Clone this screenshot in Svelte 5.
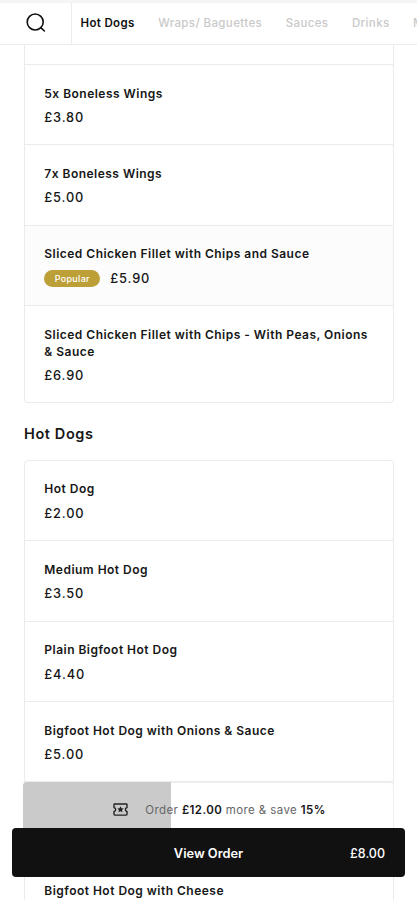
<script>
  let tabs = ["Hot Dogs", "Wraps/ Baguettes", "Sauces", "Drinks", "Milkshakes"];
  let activeTab = "Hot Dogs";

  let chicken = [
    { name: "5x Boneless Wings", price: 3.8 },
    { name: "7x Boneless Wings", price: 5 },
    { name: "Sliced Chicken Fillet with Chips and Sauce", price: 5.9, popular: true },
    { name: "Sliced Chicken Fillet with Chips - With Peas, Onions & Sauce", price: 6.9 },
  ];

  let hotDogs = [
    { name: "Hot Dog", price: 2 },
    { name: "Medium Hot Dog", price: 3.5 },
    { name: "Plain Bigfoot Hot Dog", price: 4.4 },
    { name: "Bigfoot Hot Dog with Onions & Sauce", price: 5 },
  ];

  let total = 8;
  let target = 20;
  $: progress = (total / target) * 100;

  function money(n) {
    return "£" + n.toFixed(2);
  }
</script>

<div class="screen">
  <header>
    <button class="search" aria-label="Search">
      <svg width="20" height="20" viewBox="0 0 20 20" fill="none" stroke="#111" stroke-width="1.6" stroke-linecap="round">
        <circle cx="9.2" cy="9" r="8" />
        <path d="M14.800 14.600l3.600 3.400" />
      </svg>
    </button>
    <nav>
      {#each tabs as tab}
        <button class="tab" class:active={tab === activeTab} on:click={() => (activeTab = tab)}>{tab}</button>
      {/each}
    </nav>
  </header>

  <main>
    <div class="card first">
      <div class="tail"></div>
      {#each chicken as item}
        <div class="item" class:highlight={item.popular}>
          <div class="name">{item.name}</div>
          <div class="price">
            {#if item.popular}<span class="badge">Popular</span>{/if}
            {money(item.price)}
          </div>
        </div>
      {/each}
    </div>

    <h2>Hot Dogs</h2>

    <div class="card">
      {#each hotDogs as item}
        <div class="item">
          <div class="name">{item.name}</div>
          <div class="price">{money(item.price)}</div>
        </div>
      {/each}
      <div class="item"></div>
      <div class="item">
        <div class="name">Bigfoot Hot Dog with Cheese</div>
      </div>
    </div>
  </main>

  <div class="basket">
    <div class="offer">
      <div class="fill" style="width: {progress}%"></div>
      <svg width="15" height="13" viewBox="0 0 16 14" fill="none" stroke="#222" stroke-width="1.5">
        <path d="M1 4.8V1.8Q1 1 1.8 1H14.2Q15 1 15 1.8V4.8Q13.2 5.2 13.2 7T15 9.2V12.2Q15 13 14.2 13H1.8Q1 13 1 12.2V9.2Q2.8 8.8 2.8 7T1 4.8Z" />
        <path d="M8 3.600l1.100 2.100 2.300.3-1.700 1.600.4 2.300L8 8.800l-2.100 1.100.4-2.300L4.600 6l2.300-.3z" fill="#222" stroke="none" />
      </svg>
      <p>Order <b>{money(target - total)}</b> more &amp; save <b>15%</b></p>
    </div>
    <button class="view">
      <span></span>
      <span class="label">View Order</span>
      <span class="total">{money(total)}</span>
    </button>
  </div>
</div>

<style>
  :global(body) {
    background: #fff;
    font-family: Inter, "Liberation Sans", sans-serif;
    color: #161616;
  }

  button {
    border: none;
    background: none;
    padding: 0;
    font: inherit;
    color: inherit;
    cursor: pointer;
  }

  .screen {
    position: relative;
    height: 900px;
    overflow: hidden;
  }

  header {
    display: flex;
    box-sizing: border-box;
    height: 45px;
    border-top: 3px solid #f5f5f5;
    border-bottom: 1px solid #ececec;
  }

  .search {
    flex: none;
    display: flex;
    align-items: center;
    justify-content: center;
    box-sizing: border-box;
    width: 72px;
    padding: 0 0 2px;
    border-right: 1px solid #ececec;
  }

  nav {
    display: flex;
    gap: 23.5px;
    padding: 0 0 2px 8.5px;
    overflow: hidden;
  }

  .tab {
    flex: none;
    font-size: 11.5px;
    font-weight: 500;
    letter-spacing: 0.38px;
    color: #c9c9c9;
  }

  .tab.active {
    font-weight: 600;
    letter-spacing: 0.35px;
    color: #111;
  }

  main {
    padding: 0 23px 0 24px;
  }

  .card {
    border: 1px solid #ebebeb;
    border-radius: 4px;
  }

  .card.first {
    border-top: none;
    border-radius: 0 0 4px 4px;
  }

  .tail {
    height: 19px;
    border-bottom: 1px solid #ebebeb;
  }

  .item {
    box-sizing: border-box;
    min-height: 80.4px;
    padding: 19.6px 20px 17.6px 19.3px;
    border-bottom: 1px solid #ebebeb;
  }

  .item:last-child {
    border-bottom: none;
  }

  .highlight {
    background: #fcfcfc;
  }

  .name {
    font-size: 12px;
    line-height: 17px;
    font-weight: 600;
    letter-spacing: 0.48px;
  }

  .price {
    display: flex;
    align-items: center;
    gap: 10px;
    margin-top: 7.5px;
    height: 17px;
    font-size: 12.8px;
    font-weight: 500;
    letter-spacing: 0.85px;
  }

  .badge {
    width: 56px;
    height: 17px;
    border-radius: 9px;
    background: #bd9f38;
    color: #fff;
    font-size: 9px;
    line-height: 17px;
    letter-spacing: 0.3px;
    text-align: center;
  }

  h2 {
    margin: 21px 0 16px;
    font-size: 14.5px;
    line-height: 20px;
    font-weight: 600;
    letter-spacing: 0.6px;
  }

  .basket {
    position: absolute;
    left: 12px;
    right: 12px;
    bottom: 23px;
  }

  .offer {
    position: relative;
    display: flex;
    align-items: center;
    justify-content: center;
    gap: 17px;
    height: 54px;
    margin: 0 11px -8px;
    padding: 1px 0 0 22px;
    box-sizing: border-box;
    border-radius: 4px 4px 0 0;
    background: #fff;
    box-shadow: inset 0 0 0 1px #efefef;
    overflow: hidden;
  }

  .fill {
    position: absolute;
    left: 0;
    top: 0;
    bottom: 0;
    background: #cacaca;
  }

  .offer svg,
  .offer p {
    position: relative;
    margin: 0;
  }

  .offer p {
    font-size: 11.5px;
    letter-spacing: 0.4px;
    color: #666;
  }

  .offer b {
    font-weight: 600;
    color: #161616;
  }

  .view {
    position: relative;
    display: grid;
    grid-template-columns: 1fr auto 1fr;
    align-items: center;
    width: 100%;
    height: 49px;
    padding: 1px 20px 0;
    border-radius: 4px;
    background: #111;
    color: #fff;
    font-size: 12.5px;
  }

  .label {
    font-size: 12.8px;
    font-weight: 600;
  }

  .total {
    font-weight: 500;
    text-align: right;
  }
</style>
